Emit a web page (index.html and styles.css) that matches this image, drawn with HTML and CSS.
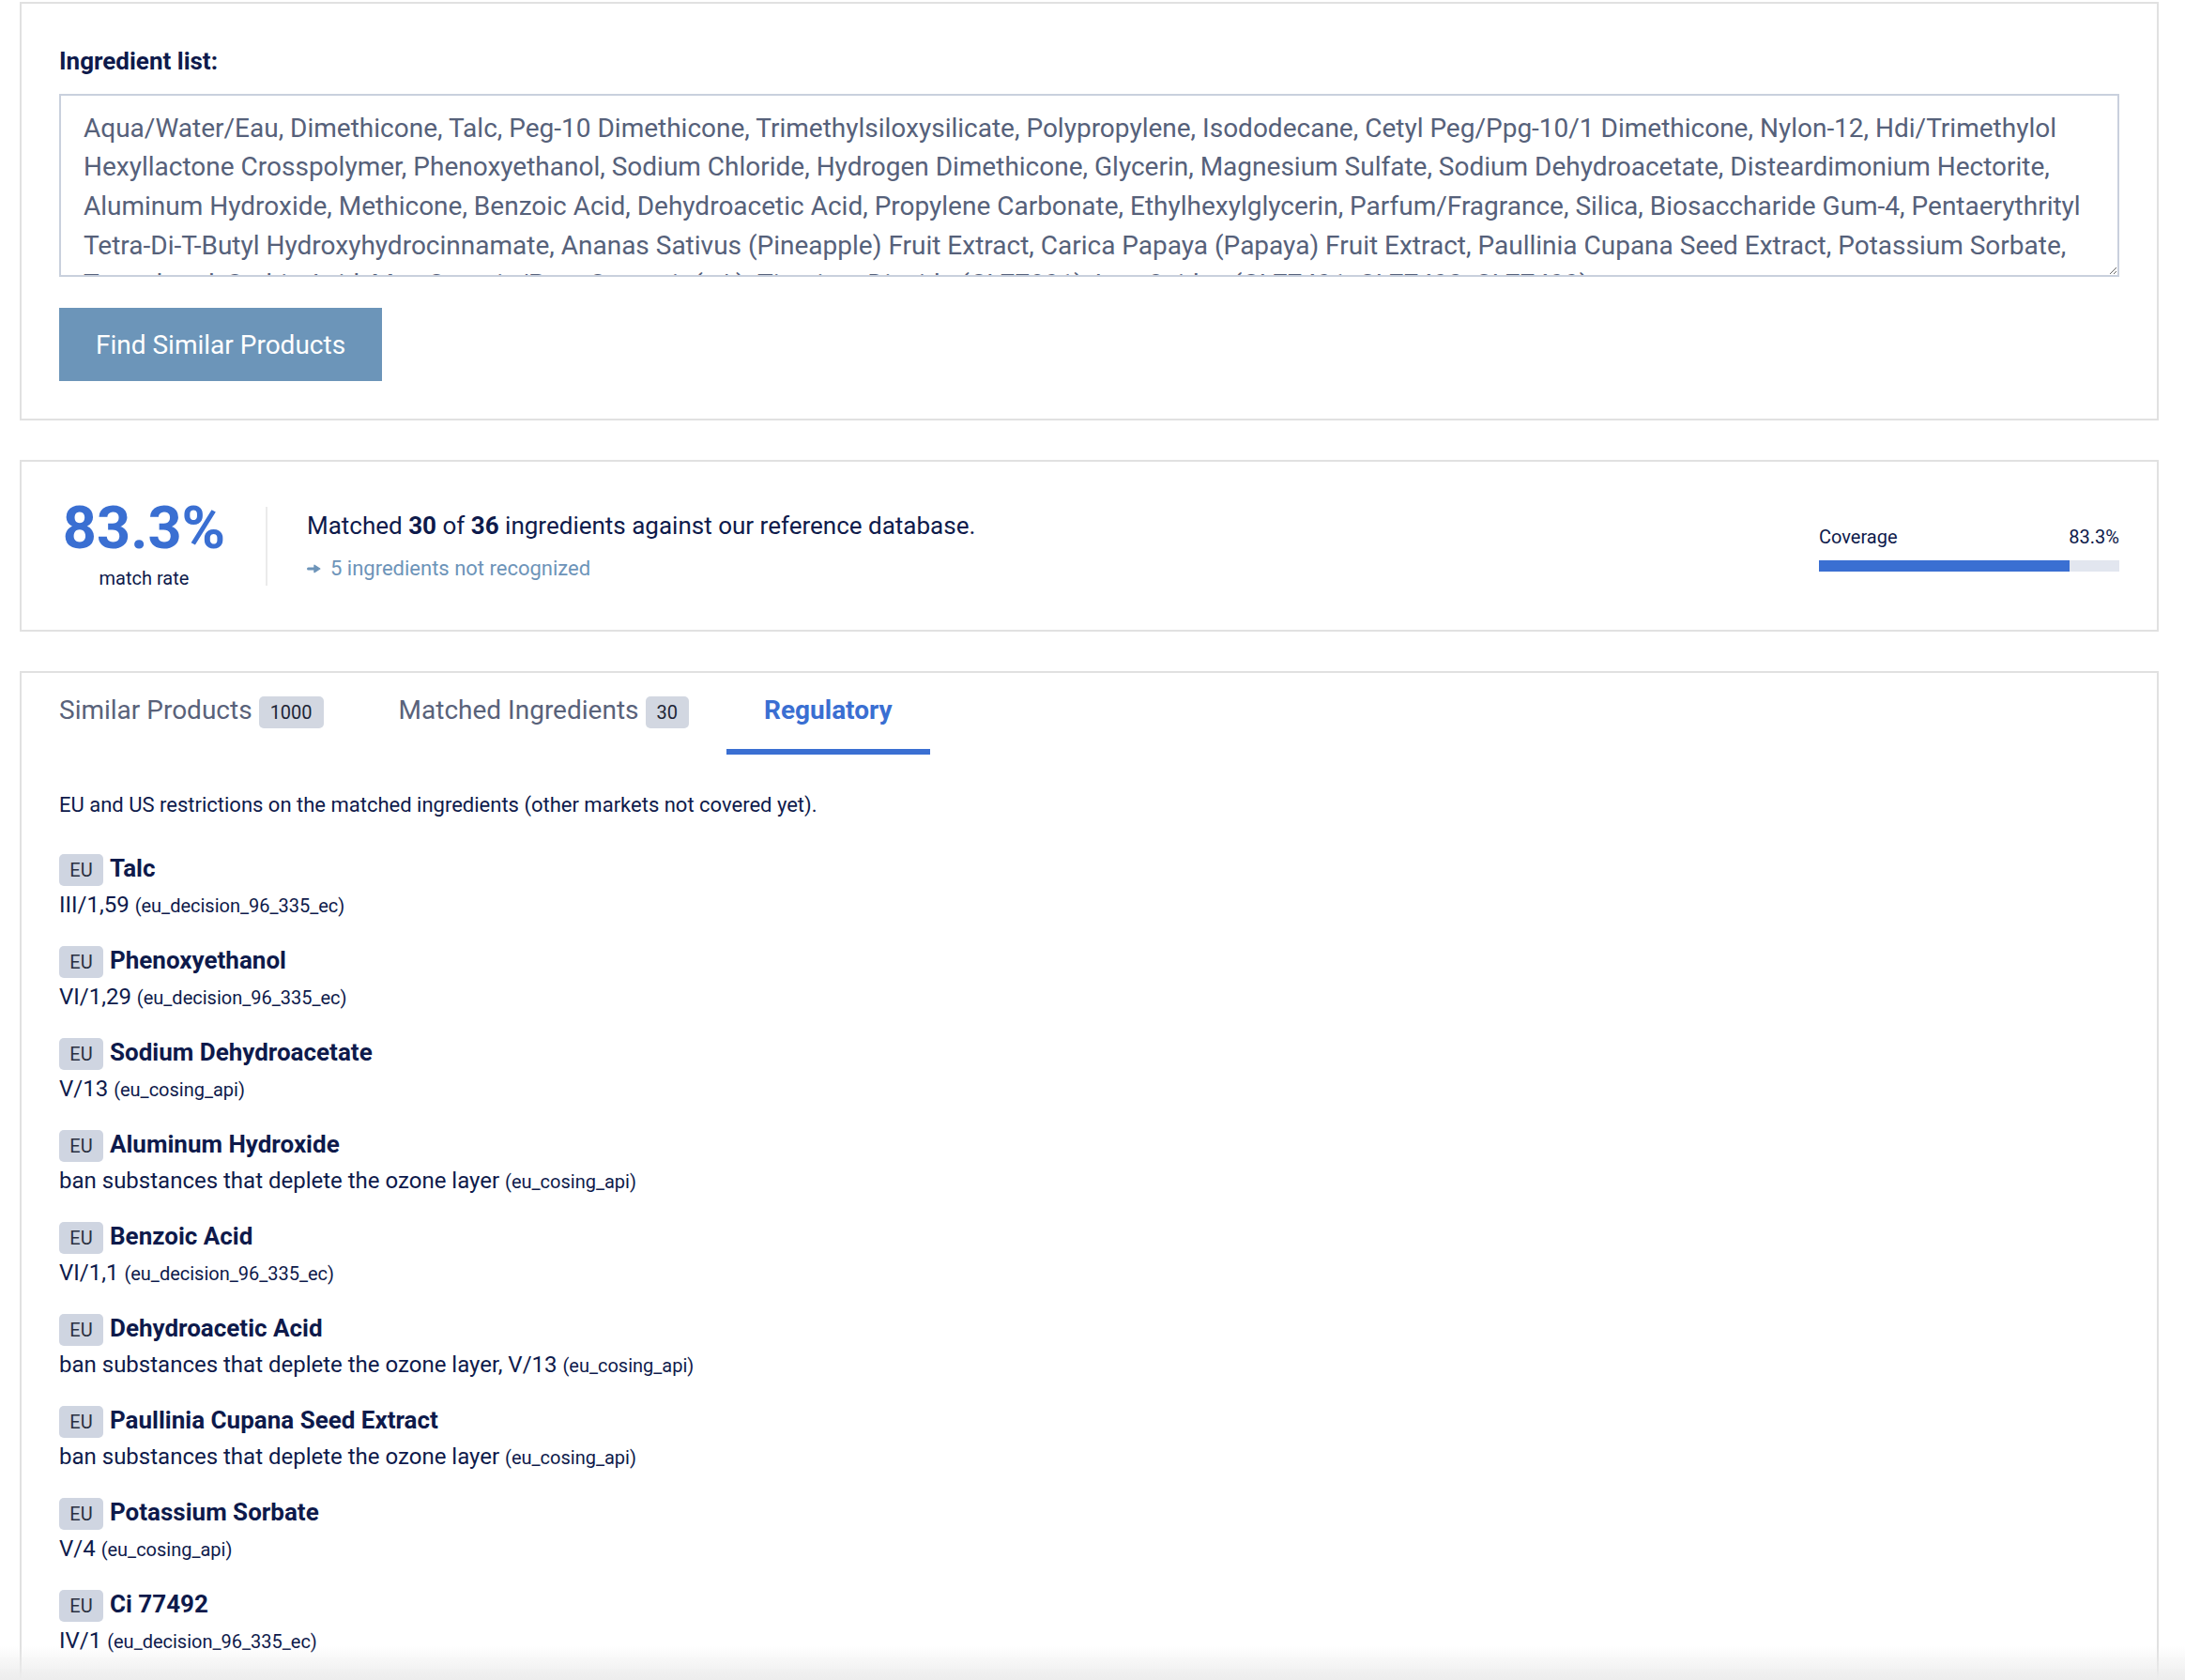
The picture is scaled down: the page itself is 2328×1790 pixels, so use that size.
FILE: index.html
```html
<!DOCTYPE html>
<html lang="en">
<head>
    <meta charset="UTF-8">
    <meta name="viewport" content="width=device-width, initial-scale=1.0">
    <title>Ingredient Matcher</title>
    <link rel="stylesheet" href="styles.css">
</head>
<body>
    <main class="page">
        <section class="card search-card">
            <label class="field-label" for="ingredients">Ingredient list:</label>
            <textarea id="ingredients" class="ingredients" spellcheck="false">Aqua/Water/Eau, Dimethicone, Talc, Peg-10 Dimethicone, Trimethylsiloxysilicate, Polypropylene, Isododecane, Cetyl Peg/Ppg-10/1 Dimethicone, Nylon-12, Hdi/Trimethylol Hexyllactone Crosspolymer, Phenoxyethanol, Sodium Chloride, Hydrogen Dimethicone, Glycerin, Magnesium Sulfate, Sodium Dehydroacetate, Disteardimonium Hectorite, Aluminum Hydroxide, Methicone, Benzoic Acid, Dehydroacetic Acid, Propylene Carbonate, Ethylhexylglycerin, Parfum/Fragrance, Silica, Biosaccharide Gum-4, Pentaerythrityl Tetra-Di-T-Butyl Hydroxyhydrocinnamate, Ananas Sativus (Pineapple) Fruit Extract, Carica Papaya (Papaya) Fruit Extract, Paullinia Cupana Seed Extract, Potassium Sorbate, Tocopherol, Sorbic Acid, May Contain/Peut Contenir (+/-): Titanium Dioxide (CI 77891), Iron Oxides (CI 77491, CI 77492, CI 77499).</textarea>
            <button class="find-btn" type="button">Find Similar Products</button>
        </section>

        <section class="card summary-card">
            <div class="rate">
                <div class="rate-value">83.3%</div>
                <div class="rate-label">match rate</div>
            </div>
            <div class="divider"></div>
            <div class="summary">
                <p class="summary-line">Matched <strong>30</strong> of <strong>36</strong> ingredients against our reference database.</p>
                <a class="unrecognized" href="#">
                    <svg width="15" height="10" viewBox="0 0 15 10">
                        <path d="M1.5 5H9" stroke="currentColor" stroke-width="3" stroke-linecap="round"/>
                        <path d="M8 1.3L13.8 5L8 8.7Z" fill="currentColor" stroke="currentColor" stroke-width="1.4" stroke-linejoin="round"/>
                    </svg>
                    5 ingredients not recognized
                </a>
            </div>
            <div class="coverage">
                <div class="coverage-head">
                    <span>Coverage</span>
                    <span>83.3%</span>
                </div>
                <div class="coverage-track">
                    <div class="coverage-fill" style="width: 83.3%"></div>
                </div>
            </div>
        </section>

        <section class="card results-card">
            <nav class="tabs">
                <a class="tab" href="#">Similar Products<span class="count">1000</span></a>
                <a class="tab" href="#">Matched Ingredients<span class="count">30</span></a>
                <a class="tab tab-active" href="#">Regulatory</a>
            </nav>

            <div class="tab-panel">
                <p class="panel-intro">EU and US restrictions on the matched ingredients (other markets not covered yet).</p>
                <ul class="reg-list">
                    <li class="reg-item">
                        <div class="reg-head"><span class="region">EU</span><span class="reg-name">Talc</span></div>
                        <div class="reg-rule">III/1,59 <span class="source">(eu_decision_96_335_ec)</span></div>
                    </li>
                    <li class="reg-item">
                        <div class="reg-head"><span class="region">EU</span><span class="reg-name">Phenoxyethanol</span></div>
                        <div class="reg-rule">VI/1,29 <span class="source">(eu_decision_96_335_ec)</span></div>
                    </li>
                    <li class="reg-item">
                        <div class="reg-head"><span class="region">EU</span><span class="reg-name">Sodium Dehydroacetate</span></div>
                        <div class="reg-rule">V/13 <span class="source">(eu_cosing_api)</span></div>
                    </li>
                    <li class="reg-item">
                        <div class="reg-head"><span class="region">EU</span><span class="reg-name">Aluminum Hydroxide</span></div>
                        <div class="reg-rule">ban substances that deplete the ozone layer <span class="source">(eu_cosing_api)</span></div>
                    </li>
                    <li class="reg-item">
                        <div class="reg-head"><span class="region">EU</span><span class="reg-name">Benzoic Acid</span></div>
                        <div class="reg-rule">VI/1,1 <span class="source">(eu_decision_96_335_ec)</span></div>
                    </li>
                    <li class="reg-item">
                        <div class="reg-head"><span class="region">EU</span><span class="reg-name">Dehydroacetic Acid</span></div>
                        <div class="reg-rule">ban substances that deplete the ozone layer, V/13 <span class="source">(eu_cosing_api)</span></div>
                    </li>
                    <li class="reg-item">
                        <div class="reg-head"><span class="region">EU</span><span class="reg-name">Paullinia Cupana Seed Extract</span></div>
                        <div class="reg-rule">ban substances that deplete the ozone layer <span class="source">(eu_cosing_api)</span></div>
                    </li>
                    <li class="reg-item">
                        <div class="reg-head"><span class="region">EU</span><span class="reg-name">Potassium Sorbate</span></div>
                        <div class="reg-rule">V/4 <span class="source">(eu_cosing_api)</span></div>
                    </li>
                    <li class="reg-item">
                        <div class="reg-head"><span class="region">EU</span><span class="reg-name">Ci 77492</span></div>
                        <div class="reg-rule">IV/1 <span class="source">(eu_decision_96_335_ec)</span></div>
                    </li>
                </ul>
            </div>
        </section>
    </main>

    <div class="bottom-fade"></div>
</body>
</html>
```

FILE: styles.css
```css
body {
    margin: 0;
    background: #ffffff;
    color: #0e1a4b;
    font-family: Roboto, "Liberation Sans", Arial, sans-serif;
}

.page {
    padding: 2px 28px 0 21px;
    display: flex;
    flex-direction: column;
    gap: 42px;
}

.card {
    background: #ffffff;
    border: 2px solid #e1e1e1;
}

/* Search form */
.search-card {
    padding: 46px 40px 40px;
    display: flex;
    flex-direction: column;
    align-items: flex-start;
}

.field-label {
    font-size: 26px;
    font-weight: bold;
    margin-bottom: 20px;
}

.ingredients {
    width: 100%;
    height: 195px;
    box-sizing: border-box;
    border: 2px solid #c9d0dd;
    border-radius: 0;
    padding: 13.5px 24px 12px;
    font-family: Roboto, "Liberation Sans", Arial, sans-serif;
    font-size: 28px;
    line-height: 41.7px;
    color: #56617a;
    resize: vertical;
    overflow: hidden;
    scrollbar-width: none;
    outline: none;
}

.find-btn {
    margin-top: 33px;
    height: 78px;
    padding: 0 39px;
    background: #6c95b9;
    color: white;
    border: none;
    border-radius: 0;
    font-family: Roboto, "Liberation Sans", Arial, sans-serif;
    font-size: 28px;
    cursor: pointer;
}

/* Match summary */
.summary-card {
    height: 179px;
    padding: 0 40px;
    display: flex;
    align-items: center;
}

.rate {
    width: 175px;
    margin-left: 3px;
    text-align: center;
    margin-top: -4px;
}

.rate-value {
    font-size: 63px;
    font-weight: bold;
    line-height: 1;
    color: #3a6fd2;
}

.rate-label {
    font-size: 20px;
    margin-top: 10px;
}

.divider {
    width: 2px;
    height: 84px;
    background: #ebebeb;
    margin: 0 42px 0 42px;
}

.summary-line {
    margin: 0 0 18px;
    font-size: 26px;
}

.unrecognized {
    display: flex;
    align-items: center;
    gap: 10px;
    font-size: 22px;
    color: #6d94b9;
    text-decoration: none;
}

.coverage {
    width: 320px;
    margin-left: auto;
    margin-top: 6px;
}

.coverage-head {
    display: flex;
    justify-content: space-between;
    font-size: 20px;
    margin-bottom: 13px;
}

.coverage-track {
    height: 12px;
    background: #e2e6ef;
}

.coverage-fill {
    height: 100%;
    background: #3a6fd2;
}

/* Tabs */
.results-card {
    padding-bottom: 40px;
}

.tabs {
    display: flex;
}

.tab {
    padding: 23px 40px 22px;
    border-bottom: 6px solid transparent;
    font-size: 28px;
    color: #59627a;
    text-decoration: none;
}

.tab-active {
    color: #3a6fd2;
    font-weight: bold;
    border-bottom-color: #3a6fd2;
}

.count {
    display: inline-block;
    height: 34px;
    line-height: 34px;
    padding: 0 12px;
    margin-left: 7px;
    border-radius: 5px;
    background: #d2d7e1;
    color: #1d2536;
    font-size: 20px;
}

.tab-panel {
    padding: 0 40px;
}

.panel-intro {
    margin: 41px 0 40px;
    font-size: 22px;
}

.reg-list {
    list-style: none;
    margin: 0;
    padding: 0;
}

.reg-item {
    margin-bottom: 30px;
}

.reg-head {
    display: flex;
    align-items: baseline;
    gap: 7px;
}

.region {
    width: 47px;
    height: 34px;
    line-height: 34px;
    text-align: center;
    border-radius: 5px;
    background: #cfd5e1;
    color: #2a3040;
    font-size: 20px;
}

.reg-name {
    font-size: 26px;
    font-weight: bold;
}

.reg-rule {
    margin-top: 6px;
    font-size: 24px;
}

.source {
    font-size: 20px;
}

/* Soft fade along the bottom of the window */
.bottom-fade {
    position: fixed;
    left: 0;
    right: 0;
    bottom: 0;
    height: 36px;
    background: linear-gradient(to bottom, rgba(238, 238, 238, 0), #ececec);
    pointer-events: none;
}
```
